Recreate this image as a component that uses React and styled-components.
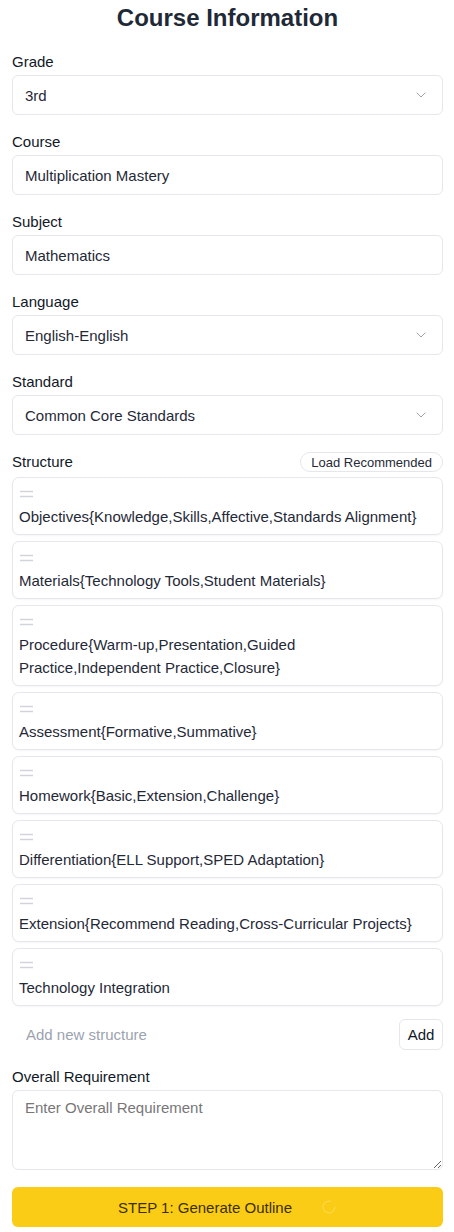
import React, { useState } from 'react'
import styled, { createGlobalStyle } from 'styled-components'
import { ChevronDown, Loader2 } from 'lucide-react'

const GlobalStyle = createGlobalStyle`
  * { box-sizing: border-box; }
  body {
    margin: 0;
    background: #ffffff;
    font-family: "Liberation Sans", Arial, sans-serif;
    color: #1f2937;
  }
`;

const structures = [
    "Objectives{Knowledge,Skills,Affective,Standards Alignment}",
    "Materials{Technology Tools,Student Materials}",
    "Procedure{Warm-up,Presentation,Guided Practice,Independent Practice,Closure}",
    "Assessment{Formative,Summative}",
    "Homework{Basic,Extension,Challenge}",
    "Differentiation{ELL Support,SPED Adaptation}",
    "Extension{Recommend Reading,Cross-Curricular Projects}",
    "Technology Integration",
];

function App() {
    const [items] = useState(structures);
    const [newItem, setNewItem] = useState("");
    const [requirement, setRequirement] = useState("");

    return (
        <Page>
            <GlobalStyle />
            <Title>Course Information</Title>

            <Field>
                <Label>Grade</Label>
                <SelectBox>
                    <span>3rd</span>
                    <ChevronDown size={16} color="#9ca3af" strokeWidth={1.5} />
                </SelectBox>
            </Field>

            <Field>
                <Label>Course</Label>
                <TextBox>Multiplication Mastery</TextBox>
            </Field>

            <Field>
                <Label>Subject</Label>
                <TextBox>Mathematics</TextBox>
            </Field>

            <Field>
                <Label>Language</Label>
                <SelectBox>
                    <span>English-English</span>
                    <ChevronDown size={16} color="#9ca3af" strokeWidth={1.5} />
                </SelectBox>
            </Field>

            <Field>
                <Label>Standard</Label>
                <SelectBox>
                    <span>Common Core Standards</span>
                    <ChevronDown size={16} color="#9ca3af" strokeWidth={1.5} />
                </SelectBox>
            </Field>

            <StructureHeader>
                <Label as="span">Structure</Label>
                <PillButton>Load Recommended</PillButton>
            </StructureHeader>

            <ItemList>
                {items.map(item => (
                    <Item key={item}>
                        <Handle>
                            <svg width="13" height="8" viewBox="0 0 13 8">
                                <line x1="0" y1="1.5" x2="13" y2="1.5" stroke="#d1d5db" strokeWidth="1.5" />
                                <line x1="0" y1="6.5" x2="13" y2="6.5" stroke="#d1d5db" strokeWidth="1.5" />
                            </svg>
                        </Handle>
                        <ItemText>{item}</ItemText>
                    </Item>
                ))}
            </ItemList>

            <AddRow>
                <AddInput
                    placeholder="Add new structure"
                    value={newItem}
                    onChange={e => setNewItem(e.target.value)}
                />
                <AddButton>Add</AddButton>
            </AddRow>

            <Field>
                <Label>Overall Requirement</Label>
                <TextArea
                    placeholder="Enter Overall Requirement"
                    value={requirement}
                    onChange={e => setRequirement(e.target.value)}
                />
            </Field>

            <GenerateButton>
                <span>STEP 1: Generate Outline</span>
                <Loader2 size={16} color="rgba(255,255,255,0.45)" strokeWidth={1} />
            </GenerateButton>
        </Page>
    )
}

export default App

const Page = styled.div`
padding: 0 11px 5px 12px;
`;

const Title = styled.h1`
margin: 0 0 16px;
font-size: 24px;
line-height: 36px;
font-weight: 700;
text-align: center;
color: #1f2937;
`;

const Field = styled.div`
display: flex;
flex-direction: column;
margin-bottom: 17px;
`;

const Label = styled.label`
font-size: 15px;
line-height: 20px;
color: #111827;
margin-bottom: 3px;
`;

const boxBase = `
height: 40px;
border: 1px solid #e5e7eb;
border-radius: 6px;
padding: 0 12px;
display: flex;
align-items: center;
font-size: 15px;
color: #1f2937;
background: #fff;
`;

const SelectBox = styled.div`
${boxBase}
justify-content: space-between;
padding-right: 13px;
`;

const TextBox = styled.div`
${boxBase}
`;

const StructureHeader = styled.div`
display: flex;
align-items: center;
justify-content: space-between;
height: 20px;
margin-bottom: 5px;
& > span { margin-bottom: 0; }
`;

const PillButton = styled.button`
height: 20px;
padding: 0 10px;
border: 1px solid #e5e7eb;
border-radius: 999px;
background: #fff;
font-family: inherit;
font-size: 13px;
color: #1f2937;
`;

const ItemList = styled.div`
display: flex;
flex-direction: column;
gap: 6px;
`;

const Item = styled.div`
border: 1px solid #e5e7eb;
border-radius: 7px;
box-shadow: 0 1px 2px rgba(0, 0, 0, 0.04);
padding: 6px 6px;
display: flex;
flex-direction: column;
gap: 2px;
background: #fff;
`;

const Handle = styled.div`
height: 19px;
display: flex;
align-items: center;
padding-left: 1px;
`;

const ItemText = styled.div`
font-size: 15px;
line-height: 23px;
color: #1f2937;
`;

const AddRow = styled.div`
display: flex;
align-items: center;
gap: 8px;
margin: 13px 0 17px;
`;

const AddInput = styled.input`
flex: 1;
height: 31px;
border: none;
outline: none;
padding: 0 14px;
font-family: inherit;
font-size: 15px;
color: #1f2937;
&::placeholder { color: #9ca3af; }
`;

const AddButton = styled.button`
height: 31px;
width: 44px;
border: 1px solid #e5e7eb;
border-radius: 6px;
background: #fff;
font-family: inherit;
font-size: 15px;
color: #111827;
`;

const TextArea = styled.textarea`
height: 80px;
border: 1px solid #e5e7eb;
border-radius: 6px;
padding: 8px 12px;
font-family: inherit;
font-size: 15px;
color: #1f2937;
resize: vertical;
&::placeholder { color: #777; }
`;

const GenerateButton = styled.button`
width: 100%;
height: 40px;
border: none;
border-radius: 6px;
background: #facc15;
display: flex;
align-items: center;
justify-content: center;
gap: 29px;
font-family: inherit;
font-size: 15px;
color: #3b2f0a;
`;
